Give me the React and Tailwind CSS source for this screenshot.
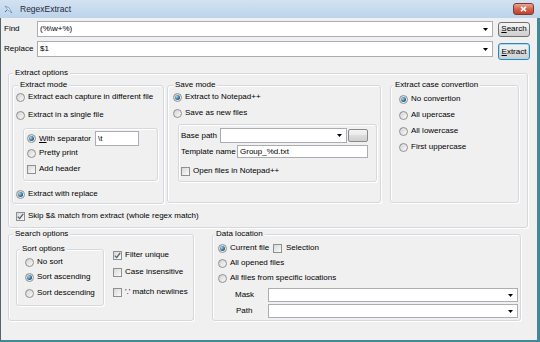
import React from "react";

const Radio = ({ checked }) => (
  <span className="flex w-[9px] h-[9px] shrink-0 items-center justify-center rounded-full border border-[#8e8f8f] bg-gradient-to-br from-[#d2d2d2] to-[#fbfbfb]">
    {checked && (
      <span className="w-[5px] h-[5px] rounded-full bg-[radial-gradient(circle_at_35%_35%,#a9dcf5_0%,#2c6f99_55%,#173e63_100%)]" />
    )}
  </span>
);

const Check = ({ checked }) => (
  <span className="flex w-[9px] h-[9px] shrink-0 items-center justify-center border border-[#8e8f8f] bg-gradient-to-br from-[#d8d8d8] to-[#fbfbfb]">
    {checked && (
      <svg width="7" height="7" viewBox="0 0 7 7">
        <path d="M0.8 3.6 L2.7 5.6 L6.2 0.9" fill="none" stroke="#4a5f7d" strokeWidth="1.3" />
      </svg>
    )}
  </span>
);

const RRow = ({ checked, children, className = "" }) => (
  <div className={`flex h-[12px] items-center gap-[3px] ${className}`}>
    <Radio checked={checked} />
    <span className="whitespace-nowrap leading-[12px]">{children}</span>
  </div>
);

const CRow = ({ checked, children, className = "" }) => (
  <div className={`flex h-[12px] items-center gap-[3px] ${className}`}>
    <Check checked={checked} />
    <span className="whitespace-nowrap leading-[12px]">{children}</span>
  </div>
);

const Group = ({ label, labelClass = "left-[4px]", className = "", children }) => (
  <div
    className={`relative shrink-0 rounded-[3px] border border-[#d5d9de] shadow-[inset_1px_1px_0_#ffffff,1px_1px_0_#ffffff] ${className}`}
  >
    {label && (
      <span className={`absolute top-[-6px] whitespace-nowrap bg-[#f0f0f0] px-[2px] leading-[10px] ${labelClass}`}>
        {label}
      </span>
    )}
    {children}
  </div>
);

const Arrow = () => (
  <svg width="5" height="3" viewBox="0 0 5 3" className="shrink-0">
    <path d="M0 0 H5 L2.5 3 Z" fill="#000" />
  </svg>
);

const Combo = ({ className = "", text }) => (
  <div className={`flex items-center border border-[#abadb3] bg-white pl-[2px] pr-[4px] ${className}`}>
    <span className="whitespace-nowrap">{text}</span>
    <span className="ml-auto">
      <Arrow />
    </span>
  </div>
);

const TextBox = ({ className = "", text }) => (
  <div className={`flex items-center border border-[#abadb3] bg-white pl-[2px] ${className}`}>
    <span className="whitespace-nowrap">{text}</span>
  </div>
);

const btnBg =
  "bg-[linear-gradient(#f3f3f3,#ebebeb_45%,#dddddd_50%,#cfcfcf)]";

export default function App() {
  return (
    <div className="w-[540px] h-[342px] overflow-hidden flex flex-col bg-[#f0f0f0] text-[8px] text-black font-['Liberation_Sans',Arial,sans-serif]">
      {/* Title bar */}
      <div className="flex h-[18px] shrink-0 items-center bg-gradient-to-b from-[#d3e2f2] to-[#bcd3eb] pl-[4px] pr-[6px]">
        <svg width="9" height="9" viewBox="0 0 9 9" className="shrink-0">
          <path d="M1 1 L5 3 L8 8 L4 5 Z" fill="#ffffff" stroke="#5a7fa8" strokeWidth="0.7" />
          <path d="M1 7 L3 5" stroke="#3f6a9a" strokeWidth="1" />
        </svg>
        <span className="ml-[7px] text-[8.5px] text-[#1e2a3a]">RegexExtract</span>
        <div className="ml-auto flex h-[12px] w-[21px] items-center justify-center rounded-[3px] border border-[#7d3b30] bg-[linear-gradient(#e9a796,#d5624c_50%,#c0402a)]">
          <svg width="7" height="6" viewBox="0 0 7 6">
            <path d="M1 0.8 L6 5.2 M6 0.8 L1 5.2" stroke="#ffffff" strokeWidth="1.6" />
          </svg>
        </div>
      </div>

      {/* Body */}
      <div className="flex flex-1 flex-col border-l border-l-[#56646e] border-r-[3px] border-r-[#3f8999] border-b-2 border-b-[#3f8999]">
        {/* Find */}
        <div className="mt-[3px] flex h-[16px] items-center">
          <span className="ml-[3px] w-[33px]">Find</span>
          <Combo className="h-[16px] w-[456px]" text="(%\w+%)" />
          <div className={`ml-[5px] flex h-[15px] w-[32px] items-center justify-center rounded-[3px] border border-[#707070] ${btnBg}`}>
            <span>
              <span className="underline">S</span>earch
            </span>
          </div>
        </div>
        {/* Replace */}
        <div className="mt-[4px] flex h-[16px] items-start">
          <span className="ml-[3px] w-[33px] leading-[16px]">Replace</span>
          <Combo className="h-[16px] w-[456px]" text="$1" />
          <div className={`ml-[5px] mt-[2px] flex h-[17px] w-[32px] shrink-0 items-center justify-center rounded-[3px] border border-[#3c7fb1] shadow-[inset_0_0_0_1px_#9ee0f8] ${btnBg}`}>
            <span>
              <span className="underline">E</span>xtract
            </span>
          </div>
        </div>

        {/* Extract options */}
        <Group label="Extract options" labelClass="left-[4px]" className="ml-[7px] mt-[16px] h-[155px] w-[520px]">
          <div className="flex items-start pl-[3px] pt-[11px]">
            {/* Extract mode */}
            <Group label="Extract mode" labelClass="left-[5px]" className="h-[119px] w-[152px]">
              <div className="flex flex-col pl-[3px] pt-[5px]">
                <RRow>Extract each capture in different file</RRow>
                <RRow className="mt-[6px]">Extract in a single file</RRow>
                <Group className="ml-[7px] mt-[7px] h-[53px] w-[135px]">
                  <div className="flex flex-col pl-[3px] pt-[2px]">
                    <div className="flex h-[15px] items-center">
                      <Radio checked />
                      <span className="ml-[3px] w-[56px] whitespace-nowrap">
                        <span className="underline">W</span>ith separator
                      </span>
                      <TextBox className="h-[15px] w-[44px]" text="\t" />
                    </div>
                    <RRow className="mt-[1px]">Pretty print</RRow>
                    <CRow className="mt-[4px]">Add header</CRow>
                  </div>
                </Group>
                <RRow checked className="mt-[7px]">
                  Extract with replace
                </RRow>
              </div>
            </Group>

            {/* Save mode */}
            <Group label="Save mode" labelClass="left-[5px]" className="ml-[3px] h-[118px] w-[214px]">
              <div className="flex flex-col pl-[5px] pt-[5px]">
                <RRow checked>Extract to Notepad++</RRow>
                <RRow className="mt-[4px]">Save as new files</RRow>
                <Group className="ml-[5px] mt-[5px] h-[58px] w-[199px]">
                  <div className="flex flex-col pl-[2px] pt-[3px]">
                    <div className="flex h-[15px] items-center">
                      <span className="w-[39px] whitespace-nowrap">Base path</span>
                      <Combo className="h-[15px] w-[127px]" text="" />
                      <div className={`ml-[1px] h-[13px] w-[20px] rounded-[2px] border border-[#8a8a8a] ${btnBg}`} />
                    </div>
                    <div className="mt-[2px] flex h-[13px] items-center">
                      <span className="w-[56px] whitespace-nowrap">Template name</span>
                      <TextBox className="h-[13px] w-[131px]" text="Group_%d.txt" />
                    </div>
                    <CRow className="mt-[7px]">Open files in Notepad++</CRow>
                  </div>
                </Group>
              </div>
            </Group>

            {/* Case convertion */}
            <Group label="Extract case convertion" labelClass="left-[2px]" className="ml-[9px] h-[118px] w-[129px]">
              <div className="flex flex-col pl-[8px] pt-[7px]">
                <RRow checked>No convertion</RRow>
                <RRow className="mt-[4px]">All upercase</RRow>
                <RRow className="mt-[4px]">All lowercase</RRow>
                <RRow className="mt-[4px]">First uppercase</RRow>
              </div>
            </Group>
          </div>
          <CRow checked className="ml-[7px] mt-[6px]">
            Skip $&amp; match from extract (whole regex match)
          </CRow>
        </Group>

        {/* Bottom groups */}
        <div className="ml-[7px] mt-[6px] flex items-start">
          <Group label="Search options" labelClass="left-[4px]" className="h-[87px] w-[186px]">
            <div className="ml-[7px] mt-[14px] flex items-start">
              <Group label="Sort options" labelClass="left-[3px]" className="h-[57px] w-[88px]">
                <div className="flex flex-col pl-[8px] pt-[6px]">
                  <RRow>No sort</RRow>
                  <RRow checked className="mt-[3px]">
                    Sort ascending
                  </RRow>
                  <RRow className="mt-[4px]">Sort descending</RRow>
                </div>
              </Group>
              <div className="ml-[9px] flex flex-col">
                <CRow checked>Filter unique</CRow>
                <CRow className="mt-[5px]">Case insensitive</CRow>
                <CRow className="mt-[8px]">'.' match newlines</CRow>
              </div>
            </div>
          </Group>

          <Group label="Data location" labelClass="left-[1px]" className="ml-[18px] h-[87px] w-[309px]">
            <div className="flex flex-col pl-[5px] pt-[7px]">
              <div className="flex h-[12px] items-center">
                <div className="flex w-[55px] items-center gap-[3px]">
                  <Radio checked />
                  <span className="whitespace-nowrap">Current file</span>
                </div>
                <Check />
                <span className="ml-[4px] whitespace-nowrap">Selection</span>
              </div>
              <RRow className="mt-[3px]">All opened files</RRow>
              <RRow className="mt-[3px]">All files from specific locations</RRow>
              <div className="mt-[4px] flex h-[14px] items-center">
                <span className="ml-[17px] w-[33px]">Mask</span>
                <Combo className="h-[14px] w-[250px]" text="" />
              </div>
              <div className="mt-[2px] flex h-[14px] items-center">
                <span className="ml-[18px] w-[32px]">Path</span>
                <Combo className="h-[14px] w-[250px]" text="" />
              </div>
            </div>
          </Group>
        </div>
      </div>
    </div>
  );
}
